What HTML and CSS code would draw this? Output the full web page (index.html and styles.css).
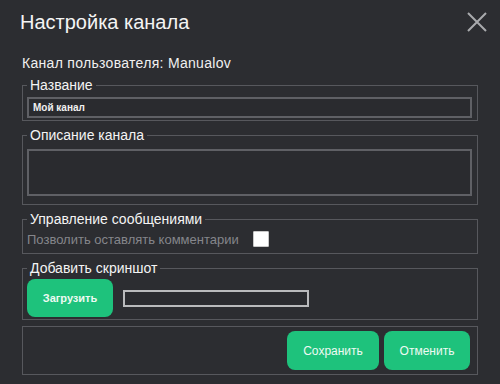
FILE: index.html
```html
<!DOCTYPE html>
<html lang="ru">
<head>
  <meta charset="UTF-8" />
  <title>Настройка канала</title>
  <link rel="stylesheet" href="styles.css">
</head>
<body>
  <div class="modal">
    <div class="modal-head">
      <h1>Настройка канала</h1>
      <button class="close" type="button" aria-label="Закрыть">
        <svg width="20" height="20" viewBox="0 0 20 20"><path d="M1 1L19 19M19 1L1 19" stroke="#a9aaad" stroke-width="2" fill="none"/></svg>
      </button>
    </div>

    <p class="owner">Канал пользователя: Manualov</p>

    <form class="channel-form">
      <fieldset class="group">
        <legend>Название</legend>
        <input type="text" class="field" value="Мой канал" />
      </fieldset>

      <fieldset class="group">
        <legend>Описание канала</legend>
        <textarea class="field area"></textarea>
      </fieldset>

      <fieldset class="group">
        <legend>Управление сообщениями</legend>
        <label class="check-row">
          <span>Позволить оставлять комментарии</span>
          <span class="check"></span>
        </label>
      </fieldset>

      <fieldset class="group">
        <legend>Добавить скриншот</legend>
        <div class="upload-row">
          <button type="button" class="btn btn-upload">Загрузить</button>
          <div class="file-box"></div>
        </div>
      </fieldset>

      <fieldset class="group actions">
        <button type="submit" class="btn btn-action">Сохранить</button>
        <button type="button" class="btn btn-action btn-cancel">Отменить</button>
      </fieldset>
    </form>
  </div>
</body>
</html>
```

FILE: styles.css
```css
* {
  margin: 0;
  padding: 0;
  box-sizing: border-box;
  font-family: 'Liberation Sans', Arial, sans-serif;
}

body {
  background: #2c2d31;
  color: #f2f2f2;
  width: 500px;
  height: 384px;
  overflow: hidden;
}

.modal-head {
  display: flex;
  justify-content: space-between;
  align-items: center;
  padding: 8px 13px 0 20px;
  height: 40px;
}

.modal-head h1 {
  font-size: 20px;
  font-weight: 400;
  color: #f4f4f4;
  line-height: 24px;
  margin-top: -4px;
}

.close {
  background: none;
  border: none;
  width: 20px;
  height: 20px;
  margin-top: -4px;
  cursor: pointer;
}

.owner {
  font-size: 14px;
  letter-spacing: 0.3px;
  line-height: 16px;
  padding: 15px 0 0 22px;
  color: #f0f0f0;
}

.channel-form {
  padding: 0 22px;
}

.group {
  border: 1px solid #57585d;
  padding: 0 5px 2px 4px;
  margin-top: 6px;
}

.group legend {
  font-size: 14px;
  line-height: 16px;
  padding: 0 3px;
  margin-left: 0;
  color: #f4f4f4;
}

.field {
  display: block;
  width: 100%;
  height: 21px;
  margin-top: 4px;
  background: #2a2b2f;
  border: 2px solid #5f6065;
  color: #f0f0f0;
  font-size: 10px;
  font-weight: 700;
  padding: 0 4px;
  outline: none;
}

.area {
  height: 47px;
  margin-top: 6px;
  margin-bottom: 6px;
  resize: none;
}

.check-row {
  display: flex;
  align-items: center;
  gap: 14px;
  font-size: 13px;
  color: #85868b;
  padding: 4px 0 4px;
}

.check {
  width: 16px;
  height: 16px;
  background: #fff;
  border: 1px solid #c8c8c8;
  border-radius: 1px;
}

.upload-row {
  display: flex;
  align-items: center;
  gap: 10px;
  padding: 3px 0 0;
}

.btn {
  border: none;
  border-radius: 8px;
  background: #1ec27c;
  color: #eefaf3;
  cursor: pointer;
}

.btn-upload {
  width: 86px;
  height: 38px;
  font-size: 11px;
  font-weight: 700;
}

.file-box {
  width: 186px;
  height: 17px;
  border: 2px solid #b9babc;
  background: #2a2b2f;
}

.actions {
  display: flex;
  justify-content: flex-end;
  gap: 5px;
  padding: 4px 7px 4px 0;
}

.btn-action {
  width: 92px;
  height: 39px;
  font-size: 12px;
}

.btn-cancel {
  width: 86px;
}
```
